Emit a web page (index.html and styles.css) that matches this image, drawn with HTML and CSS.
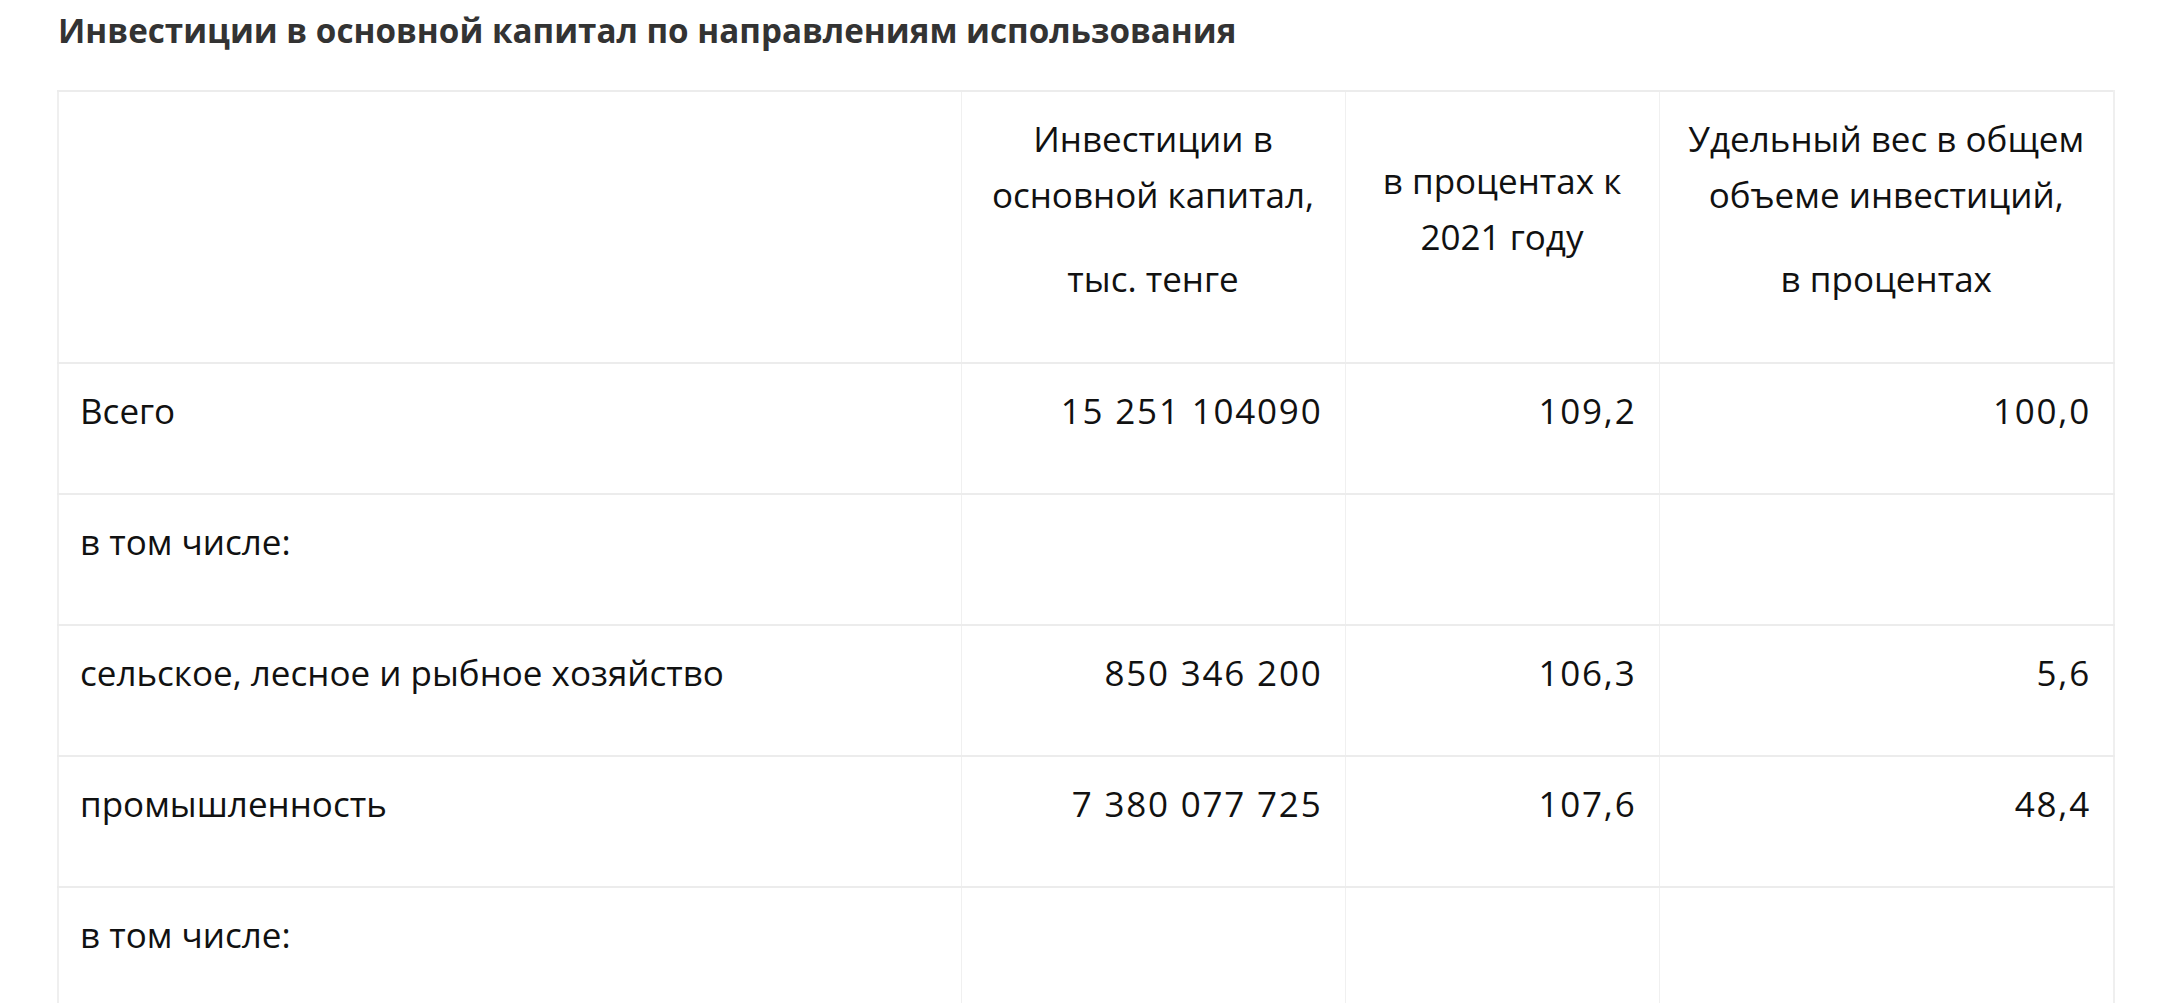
FILE: index.html
```html
<!DOCTYPE html>
<html lang="ru">
<head>
<meta charset="utf-8">
<title>Инвестиции в основной капитал</title>
<link rel="stylesheet" href="styles.css">
</head>
<body>
<main class="page">
  <h2 class="title">Инвестиции в основной капитал по направлениям использования</h2>
  <table class="data">
    <colgroup>
      <col class="c1"><col class="c2"><col class="c3"><col class="c4">
    </colgroup>
    <thead>
      <tr>
        <th class="head"></th>
        <th class="head"><p>Инвестиции в основной капитал,</p><p>тыс. тенге</p></th>
        <th class="head"><p>в процентах к 2021 году</p></th>
        <th class="head"><p>Удельный вес в общем объеме инвестиций,</p><p>в процентах</p></th>
      </tr>
    </thead>
    <tbody>
      <tr>
        <td><p>Всего</p></td>
        <td class="num"><p>15 251 104090</p></td>
        <td class="num"><p>109,2</p></td>
        <td class="num"><p>100,0</p></td>
      </tr>
      <tr>
        <td><p>в том числе:</p></td>
        <td class="num"></td>
        <td class="num"></td>
        <td class="num"></td>
      </tr>
      <tr>
        <td><p>сельское, лесное и рыбное хозяйство</p></td>
        <td class="num"><p>850 346 200</p></td>
        <td class="num"><p>106,3</p></td>
        <td class="num"><p>5,6</p></td>
      </tr>
      <tr>
        <td><p>промышленность</p></td>
        <td class="num"><p>7 380 077 725</p></td>
        <td class="num"><p>107,6</p></td>
        <td class="num"><p>48,4</p></td>
      </tr>
      <tr>
        <td><p>в том числе:</p></td>
        <td class="num"></td>
        <td class="num"></td>
        <td class="num"></td>
      </tr>
    </tbody>
  </table>
</main>
</body>
</html>
```

FILE: styles.css
```css
html, body {
  margin: 0;
  padding: 0;
  background: #ffffff;
}

.page {
  padding: 11px 47px 0 57px;
  font-family: "Open Sans", "Noto Sans", "DejaVu Sans", sans-serif;
  color: #111111;
}

.title {
  margin: 0 0 39px 1px;
  font-size: 33.2px;
  font-weight: 700;
  line-height: 40px;
  color: #333333;
}

.data {
  width: 2056px;
  table-layout: fixed;
  border-collapse: collapse;
  border-top: 2px solid #ececec;
  border-left: 2px solid #efefef;
  border-right: 2px solid #efefef;
}

.c1 { width: 903px; }
.c2 { width: 384px; }
.c3 { width: 314px; }
.c4 { width: 455px; }

.data th,
.data td {
  padding: 19px 23px 26px 21px;
  font-size: 35px;
  line-height: 56px;
  font-weight: 400;
  color: #111111;
  vertical-align: middle;
  border-bottom: 2px solid #ececec;
  border-right: 1px solid #f0f0f0;
  height: 129px;
  box-sizing: border-box;
}

.data th {
  text-align: center;
  height: 272px;
  padding-top: 19px;
  padding-bottom: 27px;
  padding-left: 20px;
  padding-right: 20px;
}

.data td {
  text-align: left;
}

.data td.num {
  text-align: right;
  letter-spacing: 1.8px;
  padding-right: 22px;
}

.data p {
  margin: 0 0 28px 0;
}
```
